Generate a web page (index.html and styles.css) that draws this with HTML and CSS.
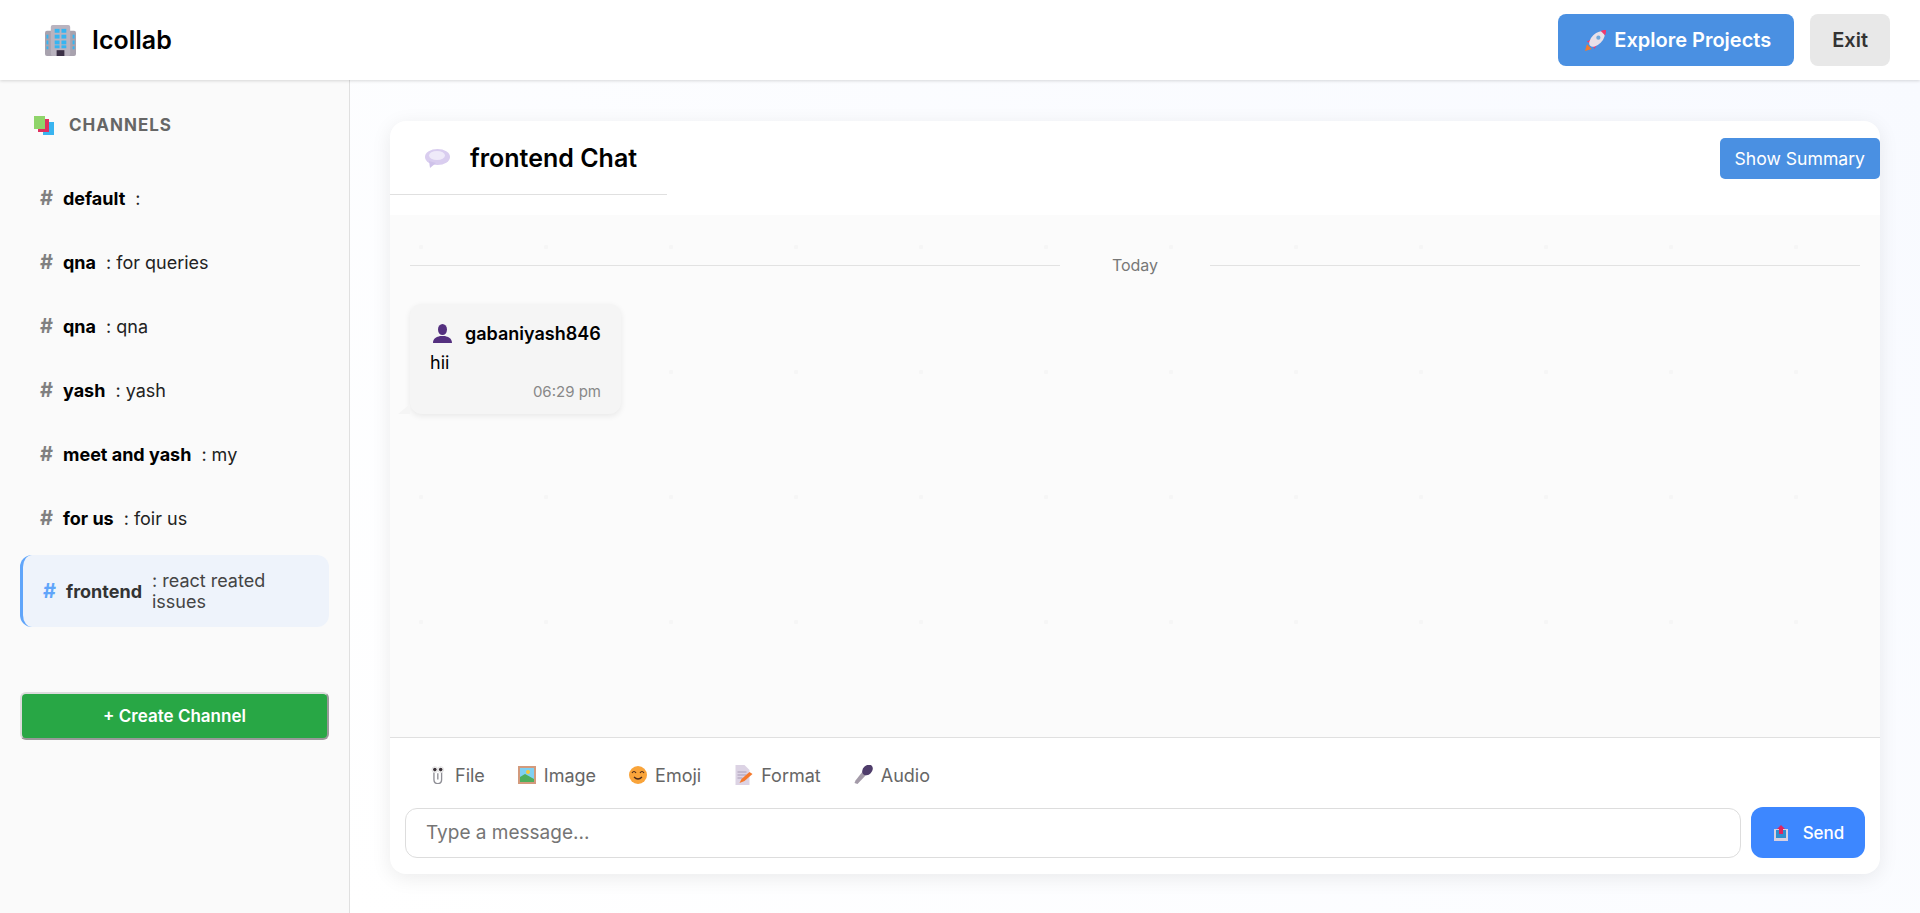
FILE: index.html
```html
<!DOCTYPE html>
<html>

<head>
  <title>Icollab</title>
  <meta name="viewport" content="width=device-width, initial-scale=1">
  <link rel="stylesheet" href="styles.css">
</head>

<body>
  <header class="topbar">
    <div class="logo">
      <svg class="logo-icon" viewBox="0 0 32 32">
        <rect x="0" y="6" width="32" height="26" rx="2" fill="#a8a2ae" />
        <rect x="6" y="0" width="20" height="32" rx="2" fill="#b9b3bf" />
        <g fill="#35b5f2">
          <rect x="10" y="4" width="5" height="4" />
          <rect x="17" y="4" width="5" height="4" />
          <rect x="10" y="10" width="5" height="4" />
          <rect x="17" y="10" width="5" height="4" />
          <rect x="10" y="16" width="5" height="4" />
          <rect x="17" y="16" width="5" height="4" />
          <rect x="10" y="21" width="5" height="3" />
          <rect x="17" y="21" width="5" height="3" />
          <rect x="1.500" y="10" width="2" height="4" />
          <rect x="1.500" y="16" width="2" height="4" />
          <rect x="1.500" y="22" width="2" height="3" />
          <rect x="28.500" y="10" width="2" height="4" />
          <rect x="28.500" y="16" width="2" height="4" />
          <rect x="28.500" y="22" width="2" height="3" />
        </g>
        <rect x="12" y="26" width="8" height="6" fill="#3b3046" />
      </svg>
      <span class="logo-text">Icollab</span>
    </div>
    <div class="topbar-actions">
      <button class="btn-explore">
        <svg class="rocket" viewBox="0 0 22 22">
          <path d="M0 22 L2 15 L7 20 Z" fill="#f5792c" />
          <path d="M2 12 L8 9 L13 14 L10 20 L7 15 Z" fill="#f0386f" />
          <ellipse cx="12.500" cy="9.500" rx="5.500" ry="10" transform="rotate(45 12.500 9.500)" fill="#e8e0e8" />
          <path d="M16.500 1 C18 0 21 0 22 0 C22 2 22 4 21 5.500 Z" fill="#f0386f" />
          <circle cx="14" cy="8" r="2.200" fill="#6fa8dc" />
        </svg>
        Explore Projects
      </button>
      <button class="btn-exit">Exit</button>
    </div>
  </header>

  <div class="layout">
    <aside class="sidebar">
      <div class="sidebar-title">
        <svg class="stack-icon" viewBox="0 0 20 19">
          <rect x="9" y="6" width="11" height="13" fill="#39b4f0" />
          <rect x="4" y="3" width="11" height="13" fill="#e0305f" />
          <rect x="0" y="0" width="11" height="13" fill="#8fd46a" />
        </svg>
        <span>CHANNELS</span>
      </div>

      <ul class="channels">
        <li class="channel"><span class="hash">#</span><span class="name">default</span><span class="desc">:</span></li>
        <li class="channel"><span class="hash">#</span><span class="name">qna</span><span class="desc">: for queries</span></li>
        <li class="channel"><span class="hash">#</span><span class="name">qna</span><span class="desc">: qna</span></li>
        <li class="channel"><span class="hash">#</span><span class="name">yash</span><span class="desc">: yash</span></li>
        <li class="channel"><span class="hash">#</span><span class="name">meet and yash</span><span class="desc">: my</span></li>
        <li class="channel"><span class="hash">#</span><span class="name">for us</span><span class="desc">: foir us</span></li>
        <li class="channel active"><span class="hash">#</span><span class="name">frontend</span><span class="desc">: react reated issues</span></li>
      </ul>

      <button class="btn-create">+ Create Channel</button>
    </aside>

    <main class="main">
      <section class="chat">
        <div class="chat-header">
          <h2 class="chat-title">
            <svg class="balloon" viewBox="0 0 25 19">
              <ellipse cx="12.500" cy="8" rx="12.500" ry="8" fill="#d9cdef" />
              <path d="M4 12 L5 19 L11 14 Z" fill="#cfc2ea" />
              <ellipse cx="12" cy="6.500" rx="8" ry="4.500" fill="#efeaf9" />
            </svg>
            frontend Chat
          </h2>
          <button class="btn-summary">Show Summary</button>
        </div>

        <div class="messages">
          <div class="date-row"><span>Today</span></div>
          <div class="bubble">
            <div class="author">
              <svg class="person" viewBox="0 0 19 19">
                <ellipse cx="9.500" cy="5.500" rx="4.500" ry="5.500" fill="#54307f" />
                <path d="M0 19 C0 14 4 13 7 12 H12 C15 13 19 14 19 19 Z" fill="#54307f" />
              </svg>
              gabaniyash846
            </div>
            <div class="text">hii</div>
            <div class="time">06:29 pm</div>
          </div>
        </div>

        <div class="composer">
          <div class="tools">
            <span class="tool">
              <svg class="tool-icon" viewBox="0 0 18 20">
                <path d="M4.500 7 V15 C4.500 21 13 21 13 15 V7 M8.800 8 V15" fill="none" stroke="#8f8f96" stroke-width="1.500" />
                <circle cx="5.500" cy="4" r="3.200" fill="#fff" stroke="#ddd" stroke-width="1" />
                <circle cx="12" cy="4" r="3.200" fill="#fff" stroke="#ddd" stroke-width="1" />
                <circle cx="5.500" cy="4" r="2" fill="#3a3238" />
                <circle cx="12" cy="4" r="2" fill="#3a3238" />
              </svg>
              File
            </span>
            <span class="tool">
              <svg class="tool-icon" viewBox="0 0 18 18">
                <rect width="18" height="18" fill="#d39a7c" />
                <rect x="2" y="2" width="14" height="14" fill="#7fd0f2" />
                <path d="M2 16 V11 L7 8 L16 13 V16 Z" fill="#4fae5c" />
                <circle cx="10" cy="6" r="2" fill="#f8c83a" />
              </svg>
              Image
            </span>
            <span class="tool">
              <svg class="tool-icon" viewBox="0 0 18 18">
                <circle cx="9" cy="9" r="9" fill="#f9a43a" />
                <path d="M3 7 Q5 4 7 7 M11 7 Q13 4 15 7" fill="none" stroke="#4a2a1c" stroke-width="1.200" />
                <path d="M5 11 Q9 15 13 11" fill="none" stroke="#4a2a1c" stroke-width="1.200" />
              </svg>
              Emoji
            </span>
            <span class="tool">
              <svg class="tool-icon tall" viewBox="0 0 18 20">
                <path d="M1 0 H10 L15 5 V20 H1 Z" fill="#dcd3e4" />
                <path d="M3 7 H12 M3 10 H12 M3 13 H8" stroke="#a99cb6" stroke-width="1" />
                <path d="M5 18 L7 14 L15 7 L18 9 L10 16 Z" fill="#f5792c" />
              </svg>
              Format
            </span>
            <span class="tool">
              <svg class="tool-icon tall" viewBox="0 0 18 20">
                <path d="M0 18 L1 15.500 L8.500 6 L12 9.500 L3 19 Z" fill="#a39aa8" />
                <ellipse cx="13" cy="5" rx="4.500" ry="6" transform="rotate(45 13 5)" fill="#4f3d6b" />
              </svg>
              Audio
            </span>
          </div>
          <div class="input-row">
            <input class="message-input" type="text" placeholder="Type a message...">
            <button class="btn-send">
              <svg class="send-icon" viewBox="0 0 14 16">
                <rect x="0" y="4" width="14" height="12" fill="#d9d0e0" />
                <rect x="2" y="5" width="10" height="8" fill="#2f8fd0" />
                <path d="M7 0 L11 4 H9 V9 H5 V4 H3 Z" fill="#e0245e" />
              </svg>
              Send
            </button>
          </div>
        </div>
      </section>
    </main>
  </div>
</body>

</html>
```

FILE: styles.css
```css
* {
  box-sizing: border-box;
}

html,
body {
  height: 100%;
}

body {
  margin: 0;
  display: flex;
  flex-direction: column;
  font-family: Inter, "Liberation Sans", sans-serif;
  color: #000;
  background-color: #fff;
}

button {
  font-family: inherit;
  cursor: pointer;
}

svg {
  display: block;
  flex-shrink: 0;
}

/* top bar */
.topbar {
  position: relative;
  z-index: 1;
  height: 80px;
  display: flex;
  align-items: center;
  justify-content: space-between;
  padding: 0 30px 0 45px;
  background-color: #fff;
  box-shadow: 0 1px 3px rgba(0, 0, 0, 0.15);
}

.logo {
  display: flex;
  align-items: center;
  gap: 16px;
}

.logo-icon {
  width: 31px;
  height: 31px;
}

.logo-text {
  font-size: 25px;
  font-weight: 600;
}

.topbar-actions {
  display: flex;
  gap: 16px;
}

.btn-explore,
.btn-exit {
  height: 52px;
  border: none;
  border-radius: 8px;
  font-size: 20px;
  font-weight: 600;
}

.btn-explore {
  display: flex;
  align-items: center;
  gap: 8px;
  padding: 0 23px 0 27px;
  background-color: #4a90e2;
  color: #fff;
}

.rocket {
  width: 21px;
  height: 21px;
}

.btn-exit {
  padding: 0 22px;
  background-color: #e8e8e8;
  color: #333;
}

/* sidebar */
.layout {
  flex: 1;
  display: flex;
  min-height: 0;
}

.sidebar {
  width: 350px;
  padding: 35px 20px 0;
  background-color: #fafafa;
  border-right: 1px solid #e0e0e0;
}

.sidebar-title {
  display: flex;
  align-items: center;
  gap: 15px;
  padding-left: 14px;
  font-size: 17px;
  font-weight: 700;
  letter-spacing: 1px;
  color: #666;
}

.stack-icon {
  width: 20px;
  height: 19px;
}

.channels {
  list-style: none;
  margin: 36px 0 0;
  padding: 0;
}

.channel {
  min-height: 54px;
  margin-bottom: 10px;
  display: flex;
  align-items: center;
  gap: 10px;
  padding: 15px 20px;
  border-radius: 12px;
  font-size: 18px;
  line-height: 21px;
  color: #222;
}

.hash {
  font-size: 20px;
  font-weight: 700;
  color: #808080;
}

.name {
  font-weight: 700;
  color: #000;
  white-space: nowrap;
}

.channel.active {
  background-color: #eef3fb;
  border-left: 3px solid #60a5fa;
  color: #444;
}

.channel.active .hash {
  color: #60a5fa;
}

.channel.active .name {
  color: #333;
}

.btn-create {
  width: 100%;
  height: 48px;
  margin-top: 55px;
  border: 2px solid;
  border-color: #dcdcdc #999 #999 #dcdcdc;
  border-radius: 6px;
  background-color: #28a745;
  color: #fff;
  font-size: 17px;
  font-weight: 600;
}

/* chat */
.main {
  flex: 1;
  min-width: 0;
  padding: 41px 40px 39px;
  background: linear-gradient(45deg, #fff, #f8faff);
}

.chat {
  height: 100%;
  display: flex;
  flex-direction: column;
  background-color: #fff;
  border-radius: 16px;
  box-shadow: 0 4px 20px rgba(0, 0, 0, 0.08);
  overflow: hidden;
}

.chat-header {
  display: flex;
  justify-content: space-between;
  align-items: flex-start;
  margin-bottom: 20px;
}

.chat-title {
  display: flex;
  align-items: center;
  gap: 20px;
  height: 74px;
  margin: 0;
  padding: 0 30px 0 35px;
  border-bottom: 1px solid #e0e0e0;
  font-size: 25px;
  font-weight: 600;
}

.balloon {
  width: 25px;
  height: 19px;
  margin-top: 2px;
}

.btn-summary {
  height: 41px;
  margin-top: 17px;
  padding: 0 15px;
  border: none;
  border-radius: 5px;
  background-color: #4a90e2;
  color: #fff;
  font-size: 17.600px;
}

.messages {
  flex: 1;
  min-height: 0;
  padding: 40px 20px 0;
  background-color: #fbfbfb;
  background-image: radial-gradient(circle at 31px 32px, #f6f6f6 2px, transparent 2.500px);
  background-size: 125px 125px;
  border-bottom: 1px solid #e0e0e0;
}

.date-row {
  display: flex;
  align-items: center;
  gap: 52px;
  height: 20px;
  font-size: 16px;
  color: #777;
}

.date-row::before,
.date-row::after {
  content: "";
  flex: 1;
  height: 1px;
  background-color: #e2e2e2;
}

.bubble {
  position: relative;
  width: 211px;
  margin-top: 29px;
  padding: 19px 20px 13px 20px;
  background-color: #f5f5f5;
  border-radius: 12px;
  box-shadow: 0 2px 6px rgba(0, 0, 0, 0.08);
}

.bubble::before {
  content: "";
  position: absolute;
  left: -12px;
  bottom: 0;
  border-style: solid;
  border-width: 0 0 10px 12px;
  border-color: transparent transparent #f5f5f5 transparent;
}

.author {
  display: flex;
  align-items: center;
  gap: 13px;
  padding-left: 3px;
  font-size: 18px;
  font-weight: 600;
  white-space: nowrap;
}

.person {
  width: 19px;
  height: 19px;
}

.text {
  margin-top: 7px;
  font-size: 18px;
  line-height: 24px;
}

.time {
  margin-top: 7px;
  text-align: right;
  font-size: 15px;
  color: #888;
}

.composer {
  padding: 23px 15px 16px;
}

.tools {
  display: flex;
  gap: 1px;
  padding-left: 8px;
  height: 46px;
}

.tool {
  display: flex;
  align-items: center;
  gap: 8px;
  padding: 0 16px;
  height: 28px;
  font-size: 18px;
  color: #666;
}

.tool-icon {
  width: 18px;
  height: 18px;
}

.tool-icon.tall {
  width: 19px;
  height: 20px;
}

.input-row {
  display: flex;
  align-items: center;
  gap: 10px;
}

.message-input {
  flex: 1;
  height: 50px;
  padding: 0 20px;
  border: 1px solid #ddd;
  border-radius: 12px;
  outline: none;
  font-family: inherit;
  font-size: 19px;
}

.message-input::placeholder {
  color: #757575;
}

.btn-send {
  width: 114px;
  height: 51px;
  display: flex;
  align-items: center;
  justify-content: center;
  gap: 15px;
  padding: 0 0 0 2px;
  border: none;
  border-radius: 12px;
  background-color: #3d87ff;
  color: #fff;
  font-size: 17px;
  font-weight: 500;
}

.send-icon {
  width: 14px;
  height: 16px;
}
```
